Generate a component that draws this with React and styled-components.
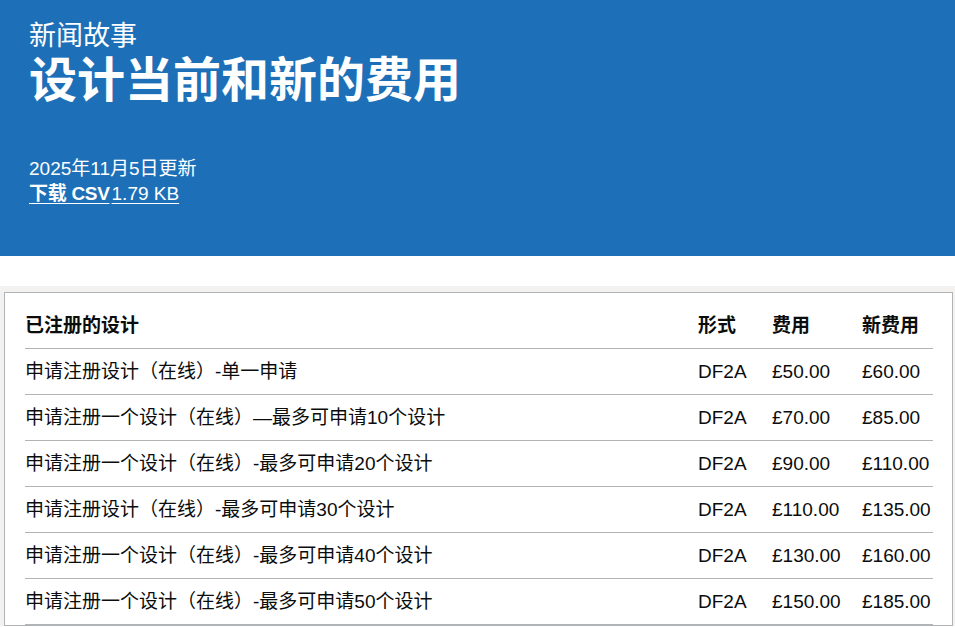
import React from 'react'
import { styled, createGlobalStyle } from 'styled-components'

const GlobalStyle = createGlobalStyle`
    body {
        margin: 0;
        background: #ffffff;
        font-family: "Liberation Sans", "Noto Sans CJK SC", sans-serif;
        color: #0b0c0c;
    }
`;

const Masthead = styled.header`
    background: #1d70b8;
    color: #ffffff;
    padding: 21px 30px 50px 29px;
`;

const Caption = styled.span`
    display: block;
    font-size: 27px;
    line-height: 30px;
    font-weight: 400;
`;

const Title = styled.h1`
    margin: 5px 0 0;
    font-size: 48px;
    line-height: 50px;
    font-weight: 700;
`;

const Meta = styled.div`
    margin-top: 50px;
    font-size: 19px;
    line-height: 25px;
`;

const Download = styled.a`
    color: #ffffff;
    text-decoration: underline;
    text-underline-offset: 3px;
    text-decoration-thickness: 1px;
`;

const Strong = styled.strong`
    font-weight: 700;
    letter-spacing: -0.3px;
    margin-right: 2px;
`;

const Spacer = styled.div`
    height: 30px;
`;

const Frame = styled.div`
    background: #f3f2f1;
    padding: 6px 2px 0 4px;
`;

const Card = styled.div`
    background: #ffffff;
    border: 1px solid #b1b4b6;
    padding: 10px 19px 0 20px;
`;

const Table = styled.table`
    width: 100%;
    border-collapse: collapse;
    table-layout: fixed;
    font-size: 19px;
    line-height: 25px;
`;

const Cell = styled.td`
    padding: 10px 20px 10px 0;
    border-bottom: 1px solid #b1b4b6;
    text-align: left;
    vertical-align: top;
    font-weight: ${({ $head }) => ($head ? 700 : 400)};
    &:last-child {
        padding-right: 0;
    }
`;

const Col = styled.col`
    width: ${({ $w }) => $w};
`;

const rows = [
    ['申请注册设计（在线）-单一申请', 'DF2A', '£50.00', '£60.00'],
    ['申请注册一个设计（在线）—最多可申请10个设计', 'DF2A', '£70.00', '£85.00'],
    ['申请注册一个设计（在线）-最多可申请20个设计', 'DF2A', '£90.00', '£110.00'],
    ['申请注册设计（在线）-最多可申请30个设计', 'DF2A', '£110.00', '£135.00'],
    ['申请注册一个设计（在线）-最多可申请40个设计', 'DF2A', '£130.00', '£160.00'],
    ['申请注册一个设计（在线）-最多可申请50个设计', 'DF2A', '£150.00', '£185.00'],
];

export default function App() {
    return (
        <>
            <GlobalStyle />
            <Masthead>
                <Caption>新闻故事</Caption>
                <Title>设计当前和新的费用</Title>
                <Meta>
                    <div>2025年11月5日更新</div>
                    <Download href="#">
                        <Strong>下载 CSV</Strong>1.79 KB
                    </Download>
                </Meta>
            </Masthead>
            <Spacer />
            <Frame>
                <Card>
                    <Table>
                        <colgroup>
                            <Col $w="auto" />
                            <Col $w="74px" />
                            <Col $w="90px" />
                            <Col $w="71px" />
                        </colgroup>
                        <thead>
                            <tr>
                                <Cell as="th" $head>已注册的设计</Cell>
                                <Cell as="th" $head>形式</Cell>
                                <Cell as="th" $head>费用</Cell>
                                <Cell as="th" $head>新费用</Cell>
                            </tr>
                        </thead>
                        <tbody>
                            {rows.map((r) => (
                                <tr key={r[0] + r[3]}>
                                    {r.map((c, i) => (
                                        <Cell key={i}>{c}</Cell>
                                    ))}
                                </tr>
                            ))}
                        </tbody>
                    </Table>
                </Card>
            </Frame>
        </>
    )
}
